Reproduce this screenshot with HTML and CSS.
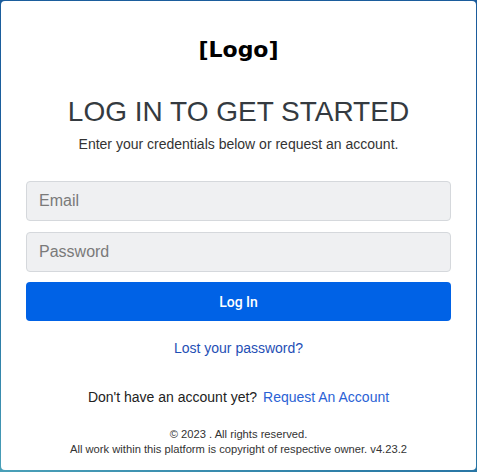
FILE: index.html
```html
<!DOCTYPE html>
<html lang="en">
<head>
<meta charset="utf-8">
<title>Log In</title>
<link rel="stylesheet" href="styles.css">
</head>
<body>
<main class="card">
  <div class="logo">[Logo]</div>
  <h1 class="title">LOG IN TO GET STARTED</h1>
  <p class="subtitle">Enter your credentials below or request an account.</p>
  <form class="form">
    <input class="field" type="email" placeholder="Email">
    <input class="field" type="password" placeholder="Password">
    <button class="btn" type="button">Log In</button>
  </form>
  <a class="lost" href="#">Lost your password?</a>
  <p class="signup">Don't have an account yet? <a class="link" href="#">Request An Account</a></p>
  <footer class="footer">
    <div>© 2023 . All rights reserved.</div>
    <div>All work within this platform is copyright of respective owner. v4.23.2</div>
  </footer>
</main>
</body>
</html>
```
FILE: styles.css
```css
html, body {
  margin: 0;
  height: 100%;
}
body {
  background: linear-gradient(200deg, #1b5c9c 0%, #1c5f9d 55%, #2e7fa8 80%, #4aa0b8 100%);
  font-family: "Liberation Sans", Arial, sans-serif;
  padding: 1px 1px 2px 1px;
  box-sizing: border-box;
}
.card {
  background: #fff;
  border-radius: 4px;
  height: 100%;
  box-sizing: border-box;
  padding: 37px 25px 0 25px;
  display: flex;
  flex-direction: column;
  align-items: center;
}
.logo {
  font-family: "DejaVu Sans", Verdana, sans-serif;
  font-weight: bold;
  font-size: 22px;
  line-height: 24px;
  color: #000;
}
.title {
  margin: 34px 0 0;
  font-weight: normal;
  font-size: 28px;
  line-height: 32px;
  color: #343a40;
}
.subtitle {
  margin: 6px 0 0;
  font-size: 14px;
  line-height: 20px;
  color: #333;
}
.form {
  align-self: stretch;
  display: flex;
  flex-direction: column;
  gap: 11px;
  margin-top: 27px;
}
.field {
  height: 40px;
  box-sizing: border-box;
  border: 1px solid #d5d8dc;
  border-radius: 4px;
  background: #eff0f2;
  padding: 0 12px;
  font-family: "Liberation Sans", Arial, sans-serif;
  font-size: 16px;
  color: #333;
}
.field::placeholder {
  color: #7a7a7a;
}
.btn {
  height: 39px;
  margin-top: -1px;
  border: 0;
  border-radius: 4px;
  background: #0062e6;
  color: #fff;
  font-family: Roboto, sans-serif;
  font-weight: 500;
  font-size: 14px;
}
.lost {
  margin-top: 18px;
  font-size: 14px;
  line-height: 18px;
  color: #1f4fb5;
  text-decoration: none;
}
.signup {
  margin: 31px 0 0;
  font-size: 14px;
  line-height: 18px;
  color: #222;
}
.link {
  margin-left: 2px;
  color: #2a62d5;
  text-decoration: none;
}
.footer {
  margin-top: 21px;
  font-size: 11.2px;
  line-height: 15px;
  color: #333;
  text-align: center;
}
```
